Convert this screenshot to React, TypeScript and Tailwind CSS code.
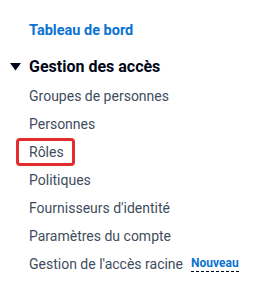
const ITEMS = [
  "Groupes de personnes",
  "Personnes",
  "Rôles",
  "Politiques",
  "Fournisseurs d'identité",
  "Paramètres du compte",
];

export default function App() {
  return (
    <div className="w-[261px] h-[288px] bg-white font-['Roboto',sans-serif] pt-[17px]">
      <div className="h-[28px] flex items-center pl-[29px]">
        <a className="text-[#0972d3] font-bold text-[14.5px]">Tableau de bord</a>
      </div>
      <div className="h-[28px] mt-[8px] flex items-center pl-[10px]">
        <svg width="11" height="8" viewBox="0 0 11 8" className="mr-[8px]">
          <polygon points="0,0 11,0 5.5,7.5" fill="#000716" />
        </svg>
        <span className="text-[16px] font-bold text-[#000716]">Gestion des accès</span>
      </div>
      <div className="mt-[1px] flex flex-col">
        {ITEMS.map((item) =>
          item === "Rôles" ? (
            <div key={item} className="h-[28px] flex items-center pl-[16px]">
              <span className="h-[28px] flex items-center border-[3px] border-[#e52c2c] rounded-[4px] pl-[10px] pr-[8px] text-[14px] text-[#414d5c]">
                {item}
              </span>
            </div>
          ) : (
            <div key={item} className="h-[28px] flex items-center pl-[29px] text-[14px] text-[#414d5c]">
              {item}
            </div>
          )
        )}
        <div className="h-[28px] flex items-center pl-[29px] text-[14px] text-[#414d5c]">
          <span>Gestion de l'accès racine</span>
          <span className="ml-[8px] text-[12px] font-bold text-[#0972d3] border-b border-dashed border-[#000716] leading-[15px]">
            Nouveau
          </span>
        </div>
      </div>
    </div>
  );
}
